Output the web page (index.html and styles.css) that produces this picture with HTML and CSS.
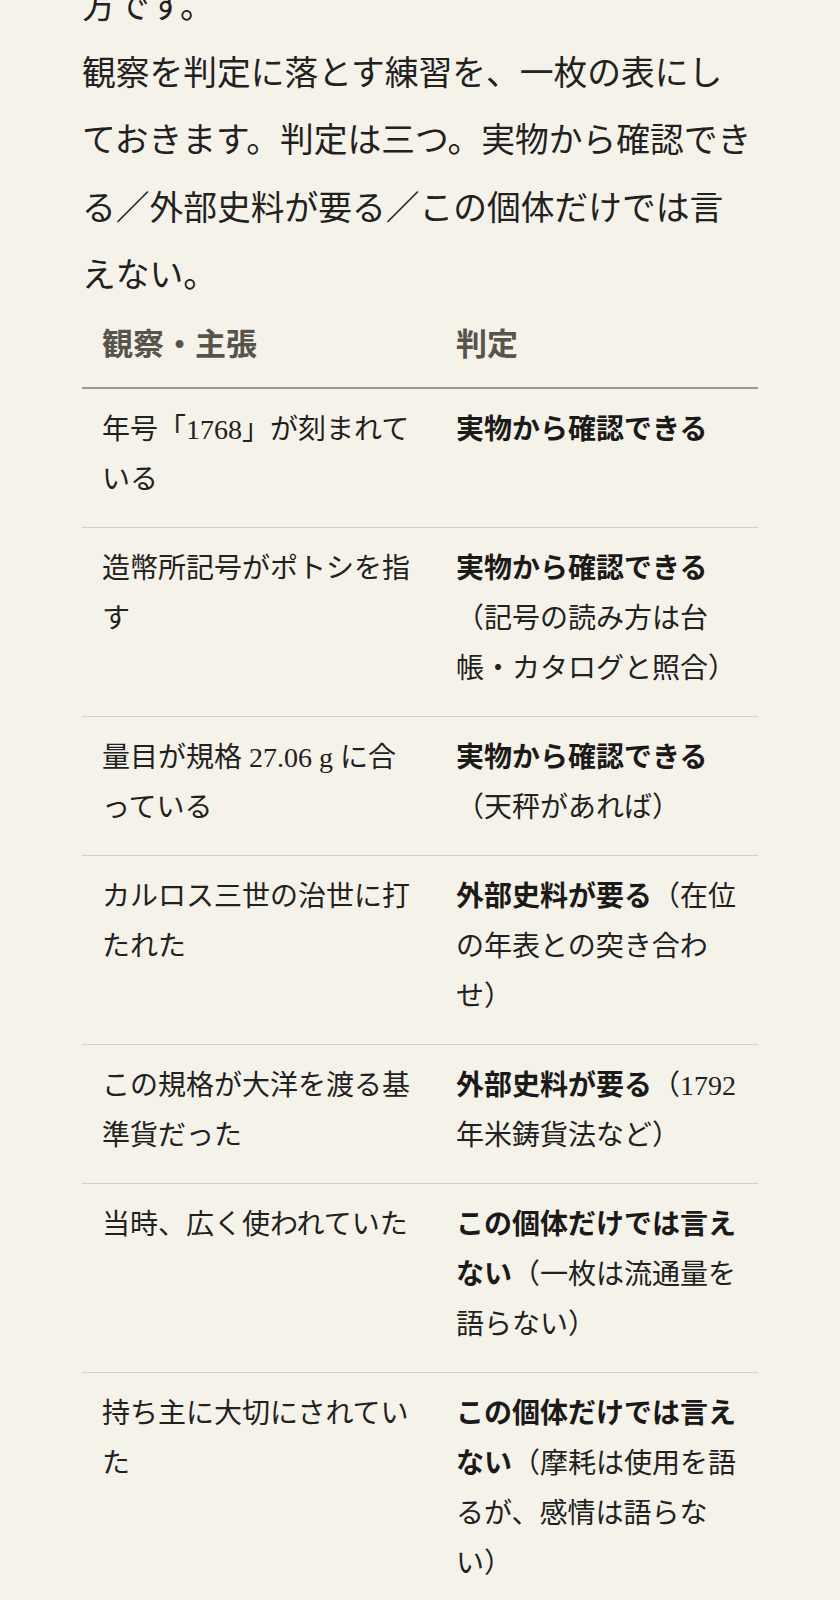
FILE: index.html
```html
<!DOCTYPE html>
<html lang="ja">
<head>
<meta charset="utf-8">
<title>観察と判定</title>
<link rel="stylesheet" href="styles.css">
</head>
<body>
<main class="page">
  <p class="text">方です。</p>
  <p class="text">観察を判定に落とす練習を、一枚の表にし<br>ておきます。判定は三つ。実物から確認でき<br>る／外部史料が要る／この個体だけでは言<br>えない。</p>
  <table class="verdicts">
    <colgroup>
      <col class="col-claim">
      <col class="col-verdict">
    </colgroup>
    <thead>
      <tr><th>観察・主張</th><th>判定</th></tr>
    </thead>
    <tbody>
      <tr><td>年号「1768」が刻まれている</td><td><strong>実物から確認できる</strong></td></tr>
      <tr><td>造幣所記号がポトシを指す</td><td><strong>実物から確認できる</strong>（記号の読み方は台帳・カタログと照合）</td></tr>
      <tr><td>量目が規格 27.06 g に合っている</td><td><strong>実物から確認できる</strong>（天秤があれば）</td></tr>
      <tr><td>カルロス三世の治世に打たれた</td><td><strong>外部史料が要る</strong>（在位の年表との突き合わせ）</td></tr>
      <tr><td>この規格が大洋を渡る基準貨だった</td><td><strong>外部史料が要る</strong>（1792年米鋳貨法など）</td></tr>
      <tr><td>当時、広く使われていた</td><td><strong>この個体だけでは言えない</strong>（一枚は流通量を語らない）</td></tr>
      <tr><td>持ち主に大切にされていた</td><td><strong>この個体だけでは言えない</strong>（摩耗は使用を語るが、感情は語らない）</td></tr>
    </tbody>
  </table>
</main>
</body>
</html>
```
FILE: styles.css
```css
html, body {
  margin: 0;
  padding: 0;
  background: #f5f2ea;
}
body {
  color: #222120;
  font-family: "Liberation Serif", "Noto Sans CJK JP", serif;
}
.page {
  width: 676px;
  margin: -27px auto 0;
}
.text {
  margin: 0;
  font-size: 33.75px;
  line-height: 67.2px;
}
.verdicts {
  width: 676px;
  border-collapse: collapse;
  table-layout: fixed;
  font-size: 28px;
  line-height: 50px;
}
.col-claim { width: 354px; }
.col-verdict { width: 322px; }
.verdicts th {
  text-align: left;
  font-size: 31px;
  font-weight: bold;
  color: #58534c;
  padding: 11px 20px 17px;
  border-bottom: 2px solid #9e9990;
}
.verdicts td {
  vertical-align: top;
  padding: 16px 20px 22px;
  border-bottom: 1.5px solid #d5d0c6;
}
.verdicts strong {
  font-weight: bold;
  color: #1c1a18;
}
```
